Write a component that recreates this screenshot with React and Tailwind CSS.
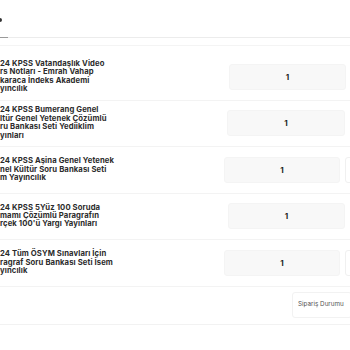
import React from "react";

const items = [
  {
    id: 1,
    lines: ["24 KPSS Vatandaşlık Video", "rs Notları - Emrah Vahap", "karaca İndeks Akademi", "yıncılık"],
    boxLeft: "ml-[9px]",
    boxWidth: "w-[117px]",
    extra: false,
  },
  {
    id: 2,
    lines: ["24 KPSS Bumerang Genel", "ltür Genel Yetenek Çözümlü", "ru Bankası Seti Yediiklim", "yınları"],
    boxLeft: "ml-[7px]",
    boxWidth: "w-[118px]",
    extra: false,
  },
  {
    id: 3,
    lines: ["24 KPSS Aşina Genel Yetenek", "nel Kültür Soru Bankası Seti", "m Yayıncılık"],
    boxLeft: "ml-[4px]",
    boxWidth: "w-[116px]",
    extra: true,
  },
  {
    id: 4,
    lines: ["24 KPSS 5Yüz 100 Soruda", "mamı Çözümlü Paragrafın", "rçek 100'ü Yargı Yayınları"],
    boxLeft: "ml-[8px]",
    boxWidth: "w-[117px]",
    extra: false,
  },
  {
    id: 5,
    lines: ["24 Tüm ÖSYM Sınavları İçin", "ragraf Soru Bankası Seti İsem", "yıncılık"],
    boxLeft: "ml-[4px]",
    boxWidth: "w-[116px]",
    extra: true,
  },
];

const App = () => {
  return (
    <div className="w-[350px] h-[350px] overflow-hidden bg-white font-['Inter',sans-serif] text-[#2b2b2b]">
      <div className="h-[37px] relative">
        <div className="absolute left-0 top-[18px] w-[2px] h-[4px] bg-[#333] rounded-r-full" />
      </div>
      <div className="h-[1px] bg-[#ececec] flex">
        <div className="w-[8px] h-[1px] bg-[#9a9a9a]" />
      </div>
      <div className="h-[7px]" />
      <div className="border-t border-[#f4f4f4]" />
      <div className="h-[8px]" />
      {items.map((item) => (
        <div
          key={item.id}
          className="h-[46.5px] flex items-center border-b border-[#f3f3f3]"
        >
          <div className="w-[220px] shrink-0 flex flex-col text-[7.7px] leading-[8.4px] font-bold tracking-[0.1px]">
            {item.lines.map((line, i) => (
              <span key={i} className="whitespace-nowrap">
                {line}
              </span>
            ))}
          </div>
          <div
            className={`${item.boxLeft} ${item.boxWidth} h-[26px] shrink-0 rounded-[3px] bg-[#f8f8f8] border border-[#f4f4f4] flex items-center justify-center text-[8px] font-bold text-[#222]`}
          >
            1
          </div>
          {item.extra && (
            <div className="ml-[5px] w-[40px] h-[26px] shrink-0 rounded-[3px] border border-[#f0f0f0] bg-white" />
          )}
        </div>
      ))}
      <div className="h-[38px] flex items-center justify-end border-b border-[#f2f2f2]">
        <div className="w-[60px] h-[26px] shrink-0 -mr-[2px] rounded-[3px] border border-[#f2f2f2] bg-white flex items-center pl-[5px] text-[6.3px] text-[#555] whitespace-nowrap">
          Sipariş Durumu
        </div>
      </div>
    </div>
  );
};

export default App;
